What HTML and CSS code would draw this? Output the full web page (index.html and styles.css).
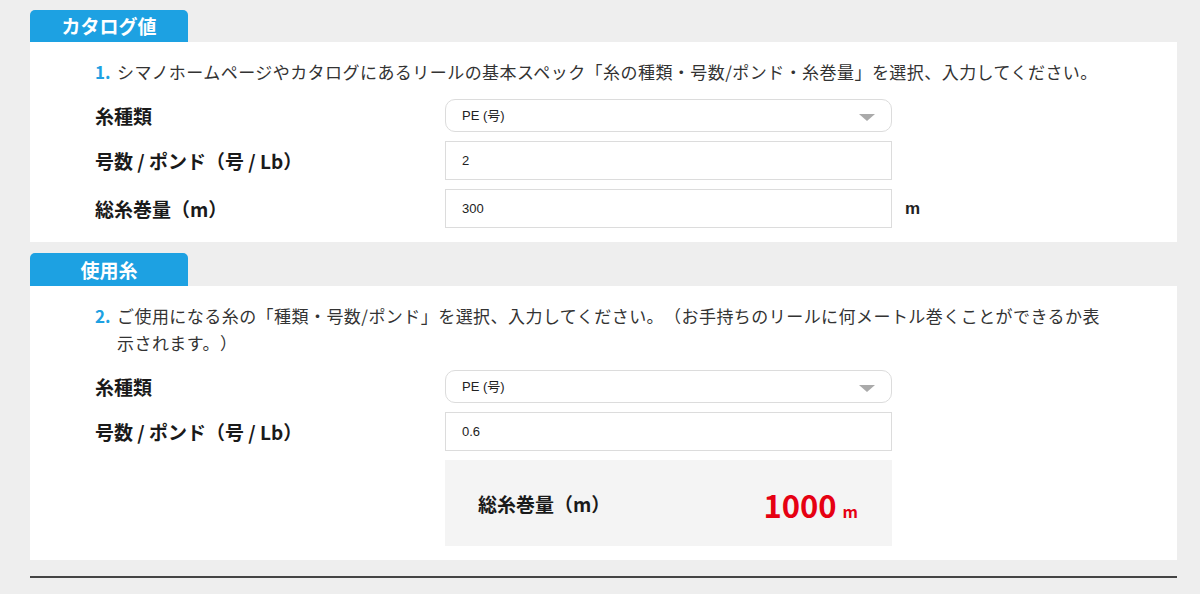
FILE: index.html
```html
<!DOCTYPE html>
<html lang="ja">
<head>
    <meta charset="UTF-8">
    <meta name="viewport" content="width=device-width, initial-scale=1.0">
    <title>糸巻量計算</title>
    <link rel="stylesheet" href="styles.css">
</head>
<body>
    <div class="wrap">
        <!-- カタログ値 -->
        <div class="tab">カタログ値</div>
        <div class="panel">
            <p class="lead"><span class="num">1.</span><span>シマノホームページやカタログにあるリールの基本スペック「糸の種類・号数/ポンド・糸巻量」を選択、入力してください。</span></p>
            <div class="row">
                <label class="label">糸種類</label>
                <div class="field select">PE (号)<span class="arrow"></span></div>
            </div>
            <div class="row">
                <label class="label">号数 / ポンド（号 / Lb）</label>
                <div class="field input">2</div>
            </div>
            <div class="row">
                <label class="label">総糸巻量（m）</label>
                <div class="field input">300</div>
                <span class="unit">m</span>
            </div>
        </div>

        <!-- 使用糸 -->
        <div class="tab tab-second">使用糸</div>
        <div class="panel">
            <p class="lead"><span class="num">2.</span><span>ご使用になる糸の「種類・号数/ポンド」を選択、入力してください。（お手持ちのリールに何メートル巻くことができるか表示されます。）</span></p>
            <div class="row">
                <label class="label">糸種類</label>
                <div class="field select">PE (号)<span class="arrow"></span></div>
            </div>
            <div class="row">
                <label class="label">号数 / ポンド（号 / Lb）</label>
                <div class="field input">0.6</div>
            </div>
            <div class="row">
                <span class="label"></span>
                <div class="field result">
                    <span class="result-label">総糸巻量（m）</span>
                    <span class="result-value">1000<small>m</small></span>
                </div>
            </div>
        </div>

        <div class="rule"></div>
    </div>
</body>
</html>
```

FILE: styles.css
```css
body {
    margin: 0;
    background-color: #eeeeee;
    font-family: "Noto Sans CJK JP", "Noto Sans", sans-serif;
    color: #222;
}
.wrap {
    width: 1147px;
    margin-left: 30px;
    padding-top: 10px;
}
.tab {
    width: 158px;
    height: 32px;
    line-height: 32px;
    background-color: #1da1e2;
    color: white;
    font-size: 19px;
    font-weight: bold;
    text-align: center;
    border-radius: 5px 5px 0 0;
}
.tab-second {
    margin-top: 11px;
    height: 33px;
    line-height: 34px;
}
.panel {
    background-color: white;
    padding: 16px 65px 14px 65px;
}
.lead {
    display: flex;
    margin: 0 0 14px 0;
    font-size: 17px;
    letter-spacing: 0.45px;
    line-height: 27px;
    color: #333;
    text-spacing-trim: space-all;
}
.num {
    flex: none;
    width: 22px;
    color: #1da1e2;
    font-weight: bold;
    letter-spacing: 0;
}
.row {
    display: flex;
    align-items: center;
    margin-bottom: 9px;
}
.row:last-child {
    margin-bottom: 0;
}
.label {
    flex: none;
    width: 350px;
    font-size: 19px;
    font-weight: bold;
    color: #1a1a1a;
}
.field {
    box-sizing: border-box;
    width: 447px;
    border: 1px solid #dcdcdc;
    padding: 0 16px;
    font-family: "Liberation Sans", "Noto Sans CJK JP", sans-serif;
    font-size: 13px;
    color: #222;
}
.select {
    position: relative;
    height: 33px;
    line-height: 31px;
    border-radius: 10px;
}
.arrow {
    position: absolute;
    right: 16px;
    top: 14px;
    width: 0;
    height: 0;
    border-left: 8px solid transparent;
    border-right: 8px solid transparent;
    border-top: 7px solid #aaa;
}
.input {
    height: 39px;
    line-height: 37px;
}
.unit {
    margin-left: 13px;
    font-family: "Liberation Sans", sans-serif;
    font-size: 17px;
    font-weight: bold;
}
.result {
    display: flex;
    align-items: center;
    justify-content: space-between;
    height: 86px;
    padding: 0 34px 0 33px;
    border: none;
    background-color: #f4f4f4;
}
.result-label {
    font-family: "Noto Sans CJK JP", sans-serif;
    font-size: 19px;
    font-weight: bold;
    color: #1a1a1a;
}
.result-value {
    font-family: "Noto Sans CJK JP", sans-serif;
    font-size: 31px;
    font-weight: bold;
    color: #e60012;
    padding-top: 2px;
}
.result-value small {
    margin-left: 6px;
    font-size: 16px;
}
.rule {
    margin-top: 16px;
    height: 2px;
    background-color: #444;
}
```
